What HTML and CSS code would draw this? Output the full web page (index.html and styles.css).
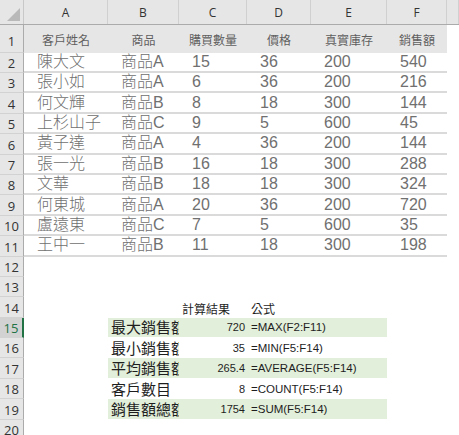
FILE: index.html
```html
<!DOCTYPE html>
<html>
<head>
<meta charset="utf-8">
<link rel="stylesheet" href="styles.css">
</head>
<body>
<div class="sheet">
  <div class="row hdr">
    <div class="corner"><span class="tri"></span></div>
    <div class="ch">A</div><div class="ch">B</div><div class="ch">C</div><div class="ch">D</div><div class="ch">E</div><div class="ch">F</div><div class="ch"></div>
  </div>
  <div class="row r1">
    <div class="rh">1</div>
    <div class="c th">客戶姓名</div><div class="c th">商品</div><div class="c th">購買數量</div><div class="c th">價格</div><div class="c th">真實庫存</div><div class="c th">銷售額</div><div class="c"></div>
  </div>
  <div class="row data"><div class="rh">2</div><div class="c d">陳大文</div><div class="c d">商品A</div><div class="c d">15</div><div class="c d">36</div><div class="c d">200</div><div class="c d">540</div><div class="c"></div></div>
  <div class="row data"><div class="rh">3</div><div class="c d">張小如</div><div class="c d">商品A</div><div class="c d">6</div><div class="c d">36</div><div class="c d">200</div><div class="c d">216</div><div class="c"></div></div>
  <div class="row data"><div class="rh">4</div><div class="c d">何文輝</div><div class="c d">商品B</div><div class="c d">8</div><div class="c d">18</div><div class="c d">300</div><div class="c d">144</div><div class="c"></div></div>
  <div class="row data"><div class="rh">5</div><div class="c d">上杉山子</div><div class="c d">商品C</div><div class="c d">9</div><div class="c d">5</div><div class="c d">600</div><div class="c d">45</div><div class="c"></div></div>
  <div class="row data"><div class="rh">6</div><div class="c d">黃子達</div><div class="c d">商品A</div><div class="c d">4</div><div class="c d">36</div><div class="c d">200</div><div class="c d">144</div><div class="c"></div></div>
  <div class="row data"><div class="rh">7</div><div class="c d">張一光</div><div class="c d">商品B</div><div class="c d">16</div><div class="c d">18</div><div class="c d">300</div><div class="c d">288</div><div class="c"></div></div>
  <div class="row data"><div class="rh">8</div><div class="c d">文華</div><div class="c d">商品B</div><div class="c d">18</div><div class="c d">18</div><div class="c d">300</div><div class="c d">324</div><div class="c"></div></div>
  <div class="row data"><div class="rh">9</div><div class="c d">何東城</div><div class="c d">商品A</div><div class="c d">20</div><div class="c d">36</div><div class="c d">200</div><div class="c d">720</div><div class="c"></div></div>
  <div class="row data"><div class="rh">10</div><div class="c d">盧遠東</div><div class="c d">商品C</div><div class="c d">7</div><div class="c d">5</div><div class="c d">600</div><div class="c d">35</div><div class="c"></div></div>
  <div class="row data"><div class="rh">11</div><div class="c d">王中一</div><div class="c d">商品B</div><div class="c d">11</div><div class="c d">18</div><div class="c d">300</div><div class="c d">198</div><div class="c"></div></div>
  <div class="row plain"><div class="rh">12</div></div>
  <div class="row plain"><div class="rh">13</div></div>
  <div class="row plain">
    <div class="rh">14</div><div class="c"></div><div class="c"></div>
    <div class="c lbl-r">計算結果</div><div class="c lbl-l">公式</div>
  </div>
  <div class="row calc"><div class="rh sel">15</div><div class="c"></div><div class="c name g">最大銷售額</div><div class="c num g">720</div><div class="c fx g">=MAX(F2:F11)</div></div>
  <div class="row calc"><div class="rh">16</div><div class="c"></div><div class="c name">最小銷售額</div><div class="c num">35</div><div class="c fx">=MIN(F5:F14)</div></div>
  <div class="row calc"><div class="rh">17</div><div class="c"></div><div class="c name g">平均銷售額</div><div class="c num g">265.4</div><div class="c fx g">=AVERAGE(F5:F14)</div></div>
  <div class="row calc"><div class="rh">18</div><div class="c"></div><div class="c name">客戶數目</div><div class="c num">8</div><div class="c fx">=COUNT(F5:F14)</div></div>
  <div class="row calc"><div class="rh">19</div><div class="c"></div><div class="c name g">銷售額總額</div><div class="c num g">1754</div><div class="c fx g">=SUM(F5:F14)</div></div>
  <div class="row plain"><div class="rh">20</div></div>
</div>
</body>
</html>
```
FILE: styles.css
```css
html, body {
  margin: 0;
  padding: 0;
  background: #ffffff;
}
body {
  width: 459px;
  height: 435px;
  overflow: hidden;
  font-family: "Liberation Sans", "Noto Sans CJK TC", sans-serif;
}
.sheet {
  display: flex;
  flex-direction: column;
}
.row {
  display: grid;
  grid-template-columns: 24px 84px 71px 68px 64px 76px 60px 12px;
  height: 20.4px;
  box-sizing: border-box;
}
.hdr {
  height: 25px;
  background: #e6e6e6;
  border-bottom: 1px solid #ababab;
}
.corner {
  position: relative;
  border-right: 1px solid #c8c8c8;
}
.tri {
  position: absolute;
  right: 3px;
  bottom: 3px;
  width: 0;
  height: 0;
  border-style: solid;
  border-width: 0 0 13px 13px;
  border-color: transparent transparent #b9b9b9 transparent;
}
.ch {
  display: flex;
  align-items: center;
  justify-content: center;
  font-family: "Open Sans", "Liberation Sans", sans-serif;
  font-size: 12px;
  color: #333333;
  border-right: 1px solid #d0d0d0;
  padding-top: 1px;
}
.rh {
  display: flex;
  align-items: flex-end;
  justify-content: center;
  padding-bottom: 1px;
  box-sizing: border-box;
  background: #e6e6e6;
  border-right: 1px solid #ababab;
  border-bottom: 1px solid #d2d2d2;
  font-family: "Open Sans", "Liberation Sans", sans-serif;
  font-size: 13px;
  line-height: 16px;
  color: #333333;
}
.rh.sel {
  background: #d2d2d2;
  color: #217346;
  border-right: 2px solid #217346;
}
.r1 {
  height: 27.6px;
}
.r1 .rh {
  padding-bottom: 3px;
}
.c {
  min-width: 0;
  box-sizing: border-box;
  white-space: nowrap;
}
.th {
  background: #e7e6e6;
  display: flex;
  align-items: center;
  justify-content: center;
  padding-top: 2px;
  font-family: "Noto Sans CJK TC", sans-serif;
  font-size: 12px;
  color: #5f5f5f;
}
.d {
  display: flex;
  align-items: center;
  padding-left: 13px;
  font-size: 16px;
  font-weight: 300;
  line-height: 18px;
  color: #707070;
  border-bottom: 2px solid #dadada;
}
.lbl-r, .lbl-l {
  display: flex;
  align-items: flex-end;
  padding-bottom: 2px;
  font-family: "Noto Sans CJK TC", sans-serif;
  font-size: 12px;
  line-height: 14px;
  color: #1e1e1e;
}
.lbl-r {
  justify-content: flex-end;
  padding-right: 17px;
}
.lbl-l {
  padding-left: 4px;
}
.calc .c {
  display: flex;
  align-items: center;
  border-bottom: 1px solid #ffffff;
}
.g {
  background: #e2efda;
}
.name {
  overflow: hidden;
  padding-left: 3px;
  font-family: "Noto Sans CJK TC", sans-serif;
  font-size: 15px;
  line-height: 18px;
  color: #1e1e1e;
}
.num {
  justify-content: flex-end;
  padding-right: 2px;
  font-size: 11px;
  color: #1e1e1e;
}
.fx {
  grid-column: span 2;
  padding-left: 4px;
  font-size: 11.5px;
  color: #1e1e1e;
}
```
